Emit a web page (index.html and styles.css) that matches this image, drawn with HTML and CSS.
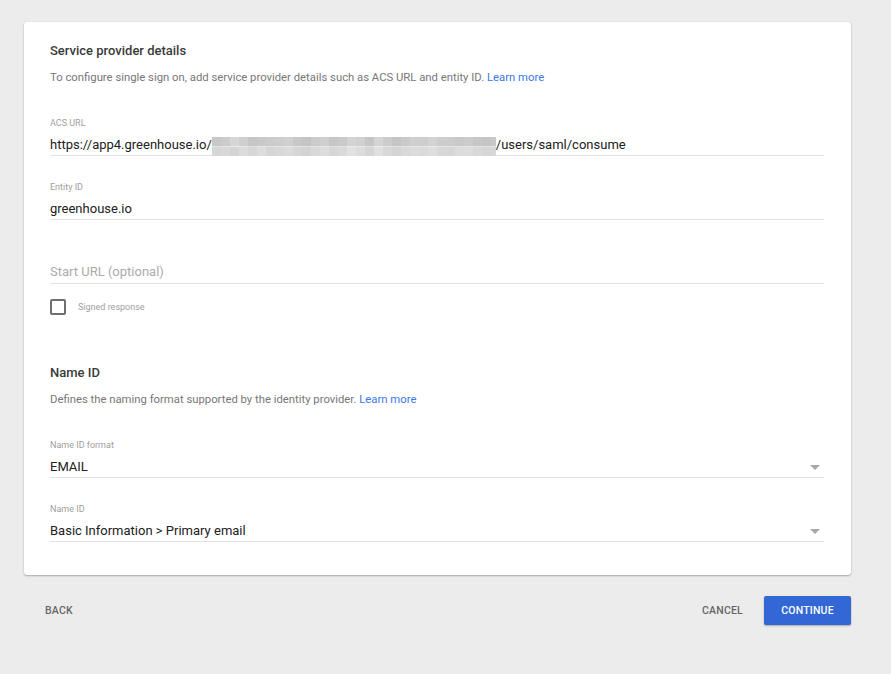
FILE: index.html
```html
<!DOCTYPE html>
<html>
<head>
<meta charset="utf-8">
<link rel="stylesheet" href="styles.css">
</head>
<body>
<div class="page">
  <div class="card">
    <h2 class="section-title">Service provider details</h2>
    <p class="section-desc">To configure single sign on, add service provider details such as ACS URL and entity ID. <a class="link">Learn more</a></p>

    <div class="field first">
      <div class="label">ACS URL</div>
      <div class="value"><span>https://app4.greenhouse.io/</span><span class="blur"></span><span>/users/saml/consume</span></div>
    </div>

    <div class="field">
      <div class="label">Entity ID</div>
      <div class="value">greenhouse.io</div>
    </div>

    <div class="field">
      <div class="label"></div>
      <div class="value placeholder">Start URL (optional)</div>
    </div>

    <label class="check-row">
      <span class="checkbox"></span>
      <span class="check-label">Signed response</span>
    </label>

    <h2 class="section-title second">Name ID</h2>
    <p class="section-desc">Defines the naming format supported by the identity provider. <a class="link">Learn more</a></p>

    <div class="field first select">
      <div class="label">Name ID format</div>
      <div class="value"><span>EMAIL</span><span class="arrow"></span></div>
    </div>

    <div class="field select">
      <div class="label">Name ID</div>
      <div class="value"><span>Basic Information &gt; Primary email</span><span class="arrow"></span></div>
    </div>
  </div>

  <div class="actions">
    <button class="btn flat">BACK</button>
    <div class="actions-right">
      <button class="btn flat">CANCEL</button>
      <button class="btn primary">CONTINUE</button>
    </div>
  </div>
</div>
</body>
</html>
```

FILE: styles.css
```css
html, body {
  margin: 0;
  padding: 0;
  background: #ececec;
}
body {
  font-family: Roboto, "Liberation Sans", Arial, sans-serif;
  color: #212121;
  width: 891px;
  height: 674px;
  overflow: hidden;
}
.page {
  width: 827px;
  margin-left: 24px;
  padding-top: 22px;
}
.card {
  background: #fff;
  border-radius: 3px;
  box-shadow: 0 1px 2px rgba(0,0,0,0.28), 0 0 1px rgba(0,0,0,0.12);
  padding: 20px 27px 33px 26px;
}
.section-title {
  margin: 0;
  font-size: 13px;
  font-weight: 500;
  line-height: 18px;
  color: #3a3a3a;
}
.section-title.second {
  margin-top: 49px;
}
.section-desc {
  margin: 10px 0 0;
  font-size: 11.3px;
  line-height: 16px;
  color: #777;
}
.link {
  color: #3b78e7;
  text-decoration: none;
}
.field {
  margin-top: 24px;
  border-bottom: 1px solid #e2e2e2;
}
.field.first {
  margin-top: 30px;
}
.label {
  height: 14px;
  font-size: 9px;
  line-height: 14px;
  color: #9e9e9e;
}
.value {
  margin-top: 5px;
  height: 20px;
  font-size: 13px;
  line-height: 20px;
  color: #212121;
  display: flex;
  align-items: flex-start;
  white-space: nowrap;
}
.value.placeholder {
  color: #ababab;
  line-height: 18px;
}
.blur {
  width: 284px;
  height: 19px;
  margin-top: 2px;
  background:
    linear-gradient(90deg,
      #c8c8c8 0 9px, #cccccc 9px 18px, #d6d6d6 18px 27px, #cfcfcf 27px 36px,
      #c6c6c6 36px 45px, #c9c9c9 45px 54px, #cbcbcb 54px 63px, #cdcdcd 63px 72px,
      #d0d0d0 72px 81px, #c8c8c8 81px 90px, #c4c4c4 90px 99px, #cbcbcb 99px 108px,
      #cfcfcf 108px 117px, #c6c6c6 117px 126px, #cacaca 126px 135px, #d4d4d4 135px 144px,
      #d0d0d0 144px 153px, #c6c6c6 153px 162px, #d5d5d5 162px 171px, #cccccc 171px 180px,
      #c5c5c5 180px 189px, #cacaca 189px 198px, #cfcfcf 198px 207px, #cecece 207px 216px,
      #d3d3d3 216px 225px, #cdcdcd 225px 234px, #cccccc 234px 243px, #c9c9c9 243px 252px,
      #cbcbcb 252px 261px, #c7c7c7 261px 270px, #c5c5c5 270px 279px, #c9c9c9 279px 288px) top / 100% 50% no-repeat,
    linear-gradient(90deg,
      #d6d6d6 0 9px, #d9d9d9 9px 18px, #d4d4d4 18px 27px, #dcdcdc 27px 36px,
      #d7d7d7 36px 45px, #dddddd 45px 54px, #d5d5d5 54px 63px, #d8d8d8 63px 72px,
      #dbdbdb 72px 81px, #d6d6d6 81px 90px, #d3d3d3 90px 99px, #d9d9d9 99px 108px,
      #dddddd 108px 117px, #d7d7d7 117px 126px, #dadada 126px 135px, #e2e2e2 135px 144px,
      #dcdcdc 144px 153px, #d5d5d5 153px 162px, #e0e0e0 162px 171px, #d8d8d8 171px 180px,
      #d4d4d4 180px 189px, #d9d9d9 189px 198px, #dcdcdc 198px 207px, #dadada 207px 216px,
      #dedede 216px 225px, #d8d8d8 225px 234px, #d7d7d7 234px 243px, #dcdcdc 243px 252px,
      #dddddd 252px 261px, #d9d9d9 261px 270px, #d6d6d6 270px 279px, #d8d8d8 279px 288px) bottom / 100% 50% no-repeat;
}
.select .value {
  justify-content: space-between;
}
.arrow {
  width: 0;
  height: 0;
  margin-top: 8px;
  margin-right: 4px;
  border-left: 5px solid transparent;
  border-right: 5px solid transparent;
  border-top: 5px solid #a8a8a8;
}
.check-row {
  display: flex;
  align-items: center;
  margin-top: 15px;
  height: 16px;
}
.checkbox {
  width: 12px;
  height: 12px;
  border: 2px solid #6f6f6f;
  border-radius: 2px;
}
.check-label {
  margin-left: 12px;
  font-size: 9px;
  color: #9e9e9e;
}
.actions {
  display: flex;
  justify-content: space-between;
  align-items: center;
  margin-top: 21px;
}
.actions-right {
  display: flex;
  align-items: center;
  gap: 13px;
}
.btn {
  font-family: Roboto, "Liberation Sans", Arial, sans-serif;
  font-size: 10.5px;
  font-weight: 500;
  letter-spacing: 0.2px;
  border: none;
  background: none;
  height: 29px;
  padding: 0 8px;
  border-radius: 2px;
  cursor: pointer;
}
.btn.flat {
  color: #666;
}
.actions > .btn.flat {
  margin-left: 13px;
}
.btn.primary {
  background: #3367d6;
  color: #fff;
  width: 87px;
  padding: 0;
  box-shadow: 0 1px 2px rgba(0,0,0,0.3);
}
```
